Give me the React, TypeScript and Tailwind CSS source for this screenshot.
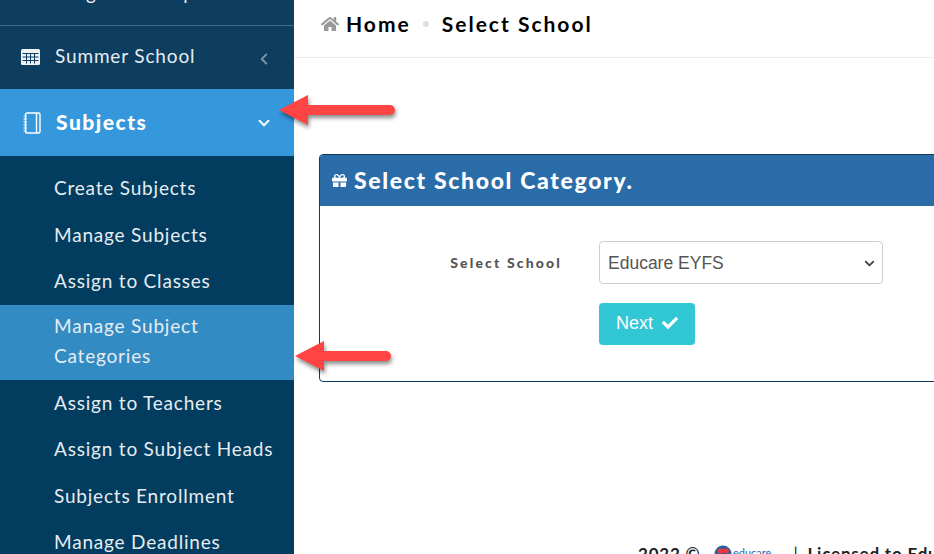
import { ChevronDown, ChevronLeft } from 'lucide-react';
import { FaCheck, FaGift, FaHome } from 'react-icons/fa';

const subItems = [
  { label: 'Create Subjects' },
  { label: 'Manage Subjects' },
  { label: 'Assign to Classes' },
  { label: 'Manage Subject Categories', active: true },
  { label: 'Assign to Teachers' },
  { label: 'Assign to Subject Heads' },
  { label: 'Subjects Enrollment' },
  { label: 'Manage Deadlines' },
];

function TableIcon() {
  return (
    <svg width="19" height="16" viewBox="0 0 19 16" className="shrink-0">
      <rect x="0" y="0" width="19" height="16" rx="1.5" fill="#eef2f5" />
      <path d="M1.5 4.5h16M1.5 8h16M1.5 11.500h16M5.500 4.500v10M9.500 4.500v10M13.500 4.500v10" stroke="#0d3e60" strokeWidth="1" />
    </svg>
  );
}

function NotebookIcon() {
  return (
    <svg width="20" height="22" viewBox="0 0 20 22" fill="none" stroke="white" strokeWidth="1.4" className="shrink-0">
      <rect x="3.5" y="1" width="14.5" height="20" rx="1.5" />
      <path d="M14.5 1v20" />
      <path d="M1.5 4h3.5M1.5 7h3.5M1.5 10h3.5M1.5 13h3.5M1.5 16h3.5M1.5 19h3.5" strokeWidth="1" />
    </svg>
  );
}

function Arrow({ tail }: { tail: number }) {
  // tail = length from tip to the round end of the shaft
  return (
    <svg width={tail + 12} height="44" viewBox={`0 0 ${tail + 12} 44`} className="drop-shadow-[1px_3px_2px_rgba(0,0,0,0.45)]">
      <path d={`M0 20 L29 5 L29 15 L${tail - 5} 15 A5 5 0 0 1 ${tail - 5} 25 L29 25 L29 35 Z`} fill="#ff4444" />
    </svg>
  );
}

export default function App() {
  return (
    <div className="relative flex h-[554px] w-[934px] overflow-hidden bg-white font-['Lato',sans-serif]">
      <aside className="flex h-[554px] w-[294px] shrink-0 flex-col overflow-hidden bg-[#0d3e60] text-white">
        <div className="flex h-[26px] shrink-0 items-end border-b border-[#44688a] pl-[55px] pr-[21px]">
          <span className="mb-[20px] flex-1 whitespace-nowrap text-[19px] leading-6 tracking-[0.8px] text-[#e6ecf1]">Progress Group</span>
          <ChevronLeft size={18} strokeWidth={2.5} className="mb-[22px] text-[#7c93a8]" />
        </div>
        <div className="flex h-[63px] shrink-0 items-center pb-[2px] pl-[21px] pr-[21px]">
          <TableIcon />
          <span className="ml-[15px] flex-1 text-[19px] tracking-[0.85px] text-[#e6ecf1]">Summer School</span>
          <ChevronLeft size={18} strokeWidth={2.5} className="mt-[4px] text-[#7c93a8]" />
        </div>
        <div className="flex h-[67px] shrink-0 items-center bg-[#3598dc] pl-[22px] pr-[21px]">
          <NotebookIcon />
          <span className="mb-[2px] ml-[14px] flex-1 text-[21px] font-black tracking-[1.5px]">Subjects</span>
          <ChevronDown size={18} strokeWidth={2.5} />
        </div>
        <nav className="flex flex-1 flex-col bg-[#023c5e] pt-[9.5px]">
          {subItems.map((item) => (
            <a
              key={item.label}
              className={`block shrink-0 pl-[54px] text-[19px] leading-[30px] tracking-[0.8px] text-[#e6ecf1] ${
                item.active ? 'bg-[#338bc3] pb-[9px] pr-[80px] pt-[6px]' : 'pb-[8.75px] pr-[10px] pt-[7.75px]'
              }`}
            >
              {item.label}
            </a>
          ))}
        </nav>
      </aside>

      <main className="flex min-w-0 flex-1 flex-col">
        <div className="flex h-[58px] shrink-0 items-center border-b border-[#eeeeee] pb-[10px] pl-[27px] text-[21px] font-bold tracking-[2px] text-black">
          <FaHome size={18} className="shrink-0 text-[#9a9a9a]" />
          <span className="ml-[7px]">Home</span>
          <span className="ml-[12px] mr-[13px] h-[6px] w-[6px] rounded-full bg-[#e0e0e0]" />
          <span>Select School</span>
        </div>

        <div className="ml-[25px] mt-[96px] w-[760px] shrink-0 overflow-hidden rounded-[4px] border border-[#123a5c]">
          <div className="flex h-[51px] items-center bg-[#2a6ca8] pl-[12px] text-[23px] font-black tracking-[1.65px] text-white">
            <FaGift size={15} className="shrink-0" />
            <span className="ml-[7px]">Select School Category.</span>
          </div>
          <div className="h-[175px] pt-[35px]">
            <div className="flex items-center">
              <label className="w-[279px] shrink-0 pr-[37px] text-right text-[14px] font-black tracking-[2.15px] text-[#555555]">
                Select School
              </label>
              <div className="flex h-[43px] w-[284px] shrink-0 items-center justify-between rounded-[4px] border border-[#cccccc] pl-[8px] pr-[5px] pt-[1px] font-['Liberation_Sans',sans-serif] text-[17.5px] text-[#555555]">
                Educare EYFS
                <ChevronDown size={15} strokeWidth={3} className="text-[#444444]" />
              </div>
            </div>
            <div className="ml-[279px] mt-[19px] flex h-[42px] w-[96px] items-center justify-center gap-[9px] rounded-[4px] bg-[#32c7d5] pb-[2px] font-['Liberation_Sans',sans-serif] text-[18px] text-white">
              Next
              <FaCheck size={16} />
            </div>
          </div>
        </div>

        <div className="ml-[344px] mt-[162px] flex h-[20px] items-center whitespace-nowrap text-[17px] font-bold tracking-[0.8px] text-[#222222]">
          <span className="shrink-0">2022 ©</span>
          <svg width="58" height="18" viewBox="0 0 58 18" className="ml-[14px] shrink-0">
            <circle cx="9" cy="9" r="8.500" fill="#2b5f9e" />
            <circle cx="6.500" cy="6" r="2.800" fill="#e63946" />
            <circle cx="12" cy="6" r="2.800" fill="#e63946" />
            <text x="19" y="12" fontSize="11" letterSpacing="0" fontWeight="400" fill="#2b6cb0">educare</text>
          </svg>
          <span className="ml-[21px] shrink-0 font-normal">|</span>
          <span className="ml-[9px] shrink-0">Licensed to Educare</span>
        </div>
      </main>

      <div className="absolute left-[279px] top-[90px]">
        <Arrow tail={116} />
      </div>
      <div className="absolute left-[295px] top-[336px]">
        <Arrow tail={96} />
      </div>
    </div>
  );
}
